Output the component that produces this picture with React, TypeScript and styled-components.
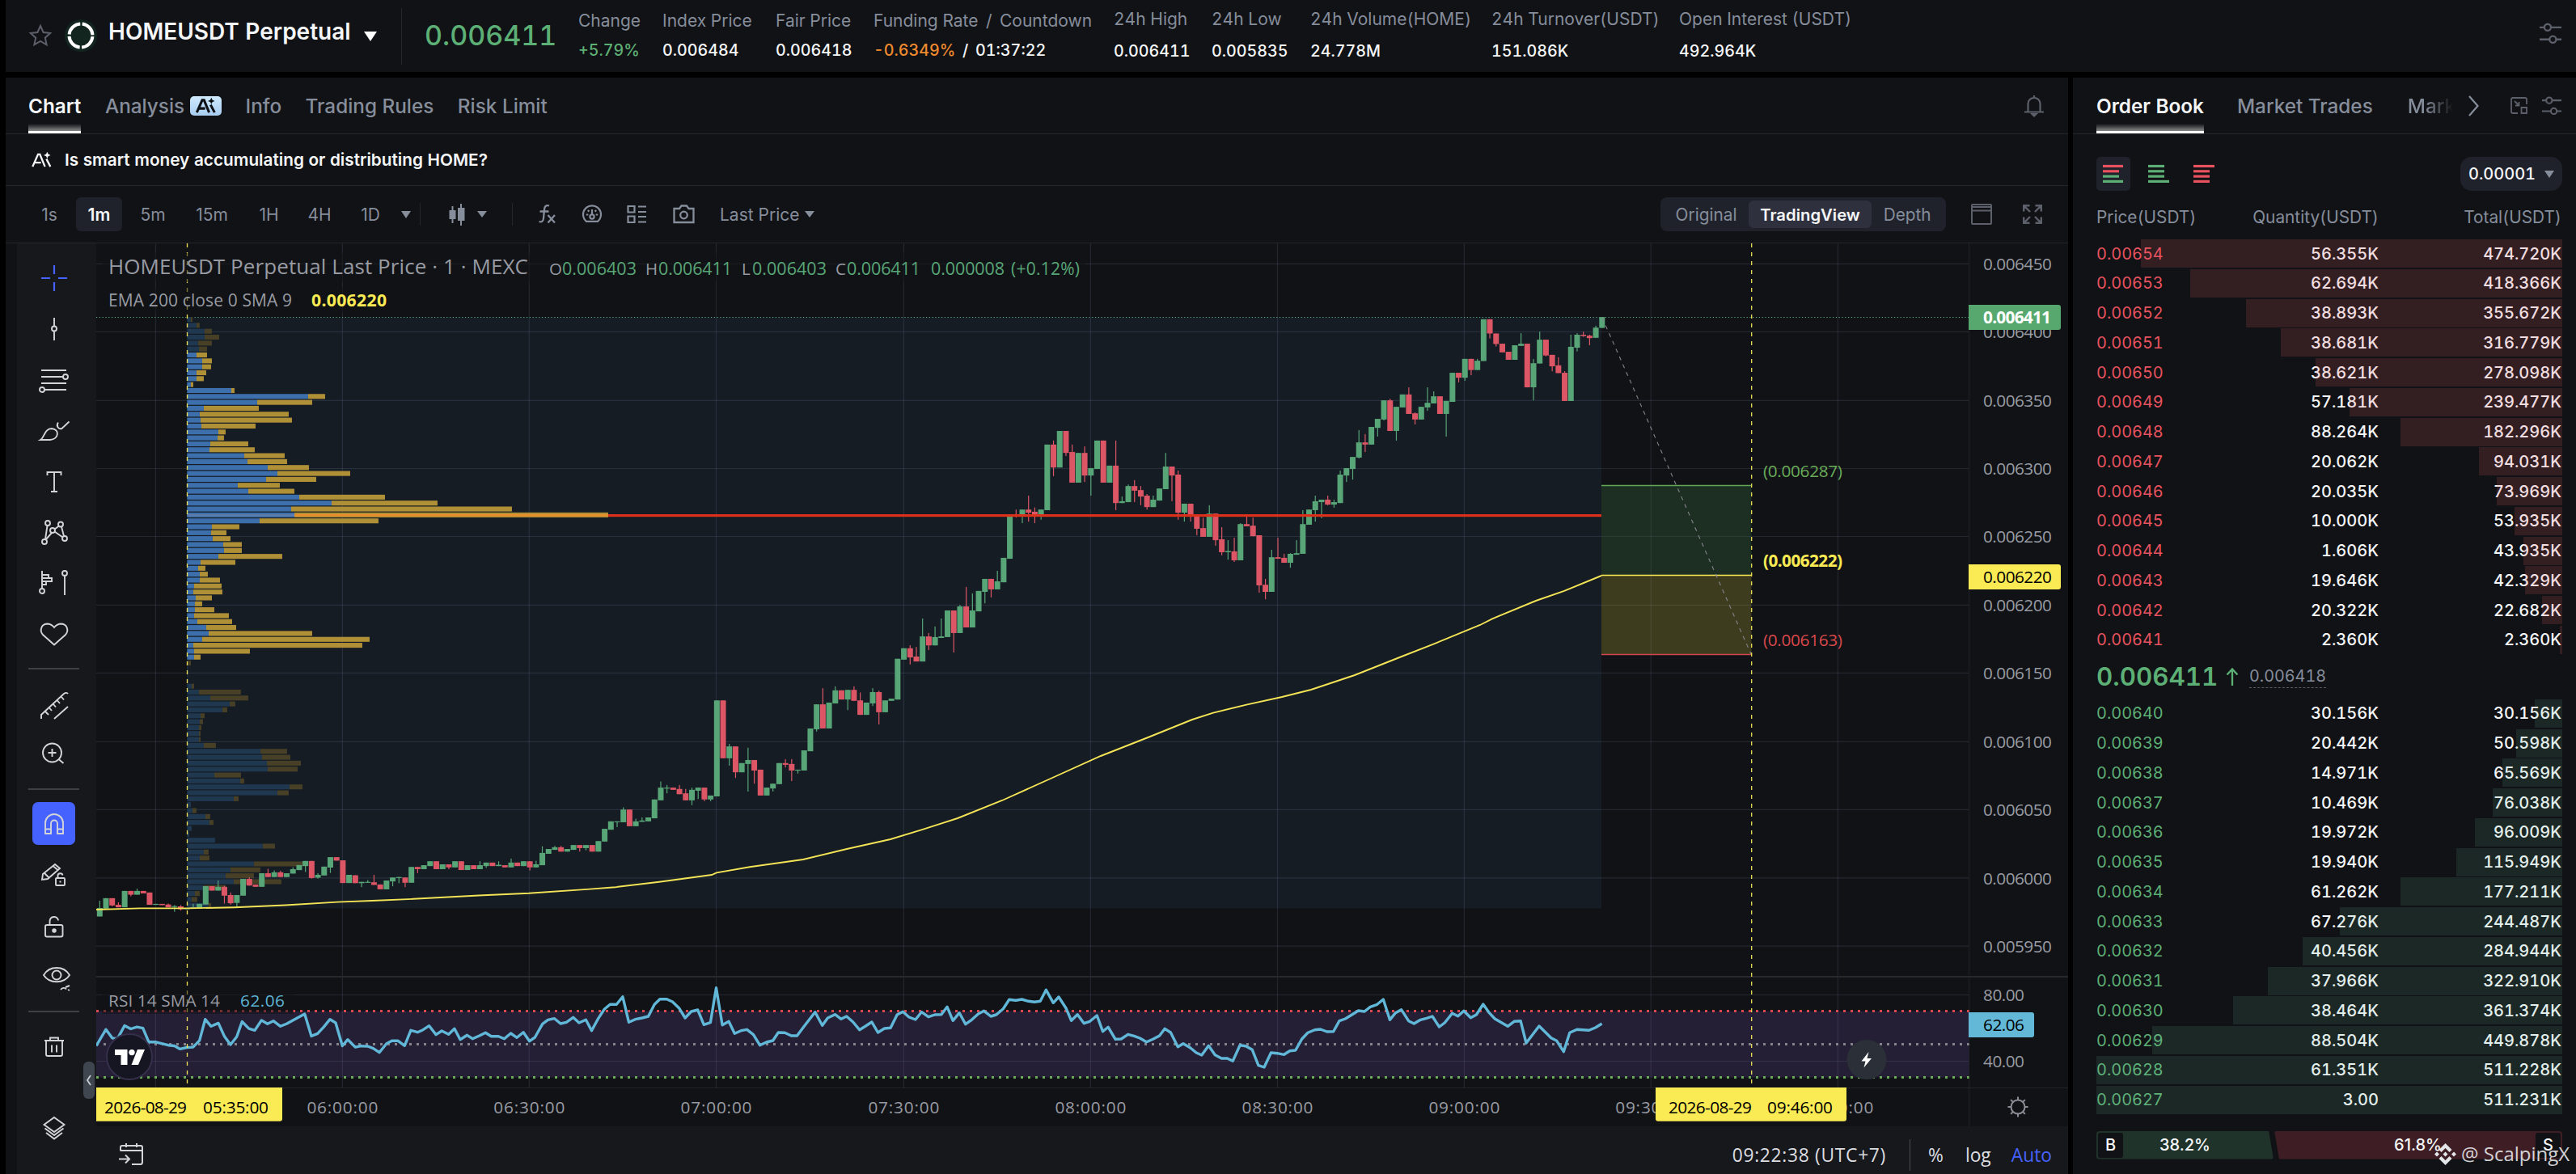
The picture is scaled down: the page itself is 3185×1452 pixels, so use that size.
import React from 'react';
import styled, { createGlobalStyle, css } from 'styled-components';

const c = {
  panel: '#111215',
  raised: '#17181c',
  line: '#24262b',
  chip: '#1f222b',
  muted: '#868d9b',
  faint: '#5c606a',
  white: '#f5f6f8',
  up: '#5db075',
  candleUp: '#58a677',
  candleDown: '#dc5666',
  down: '#e8525f',
  yellow: '#faea54',
  blue: '#4562ff',
  axis: '#989ba3',
};

const Global = createGlobalStyle`
  * { box-sizing: border-box; }
  body {
    margin: 0;
    background: #000;
    color: ${c.white};
    font-family: Inter, "Liberation Sans", sans-serif;
    font-variant-numeric: tabular-nums;
    overflow: hidden;
  }
`;

/* ---------- page frame ---------- */

const Page = styled.div`
  width: 3185px;
  height: 1452px;
  padding-left: 7px;
  display: flex;
  flex-direction: column;
  gap: 7px;
  position: relative;
  overflow: hidden;
`;
const Header = styled.header`
  height: 89px;
  flex: none;
  background: ${c.panel};
  display: flex;
  align-items: center;
  padding: 0 18px 0 29px;
`;
const Body = styled.main`
  flex: 1;
  min-height: 0;
  display: flex;
  gap: 6px;
`;
const ChartPanel = styled.section`
  width: 2550px;
  background: ${c.panel};
  display: flex;
  flex-direction: column;
`;
const BookPanel = styled.section`
  flex: 1;
  background: ${c.panel};
  display: flex;
  flex-direction: column;
`;

/* ---------- shared bits ---------- */

const Svg = styled.svg<{ $w: number; $h?: number; $color?: string; $sw?: number; $lift?: number }>`
  width: ${p => p.$w}px;
  height: ${p => p.$h ?? p.$w}px;
  margin-bottom: ${p => p.$lift ?? 0}px;
  flex: none;
  display: block;
  overflow: visible;
  fill: none;
  stroke: ${p => p.$color ?? c.faint};
  stroke-width: ${p => p.$sw ?? 2.4};
`;
const Caret = styled.i<{ $w?: number; $color?: string }>`
  flex: none;
  width: 0;
  height: 0;
  border-left: ${p => (p.$w ?? 13) / 2}px solid transparent;
  border-right: ${p => (p.$w ?? 13) / 2}px solid transparent;
  border-top: ${p => (p.$w ?? 13) * 0.72}px solid ${p => p.$color ?? c.muted};
`;
const Spacer = styled.span<{ $w?: number }>`
  flex: ${p => (p.$w ? 'none' : 1)};
  width: ${p => p.$w ?? 0}px;
`;
const Rule = styled.span<{ $h: number; $color?: string }>`
  flex: none;
  width: 1px;
  height: ${p => p.$h}px;
  background: ${p => p.$color ?? '#24262b'};
`;

/* ---------- header ---------- */

const Pair = styled.h1`
  margin: -11px 0 0 14px;
  width: 300px;
  font-size: 28px;
  font-weight: 600;
  line-height: 34px;
  white-space: nowrap;
`;
const LastPrice = styled.div`
  width: 190px;
  margin-left: 28px;
  margin-top: -2px;
  font-size: 34px;
  font-weight: 500;
  color: ${c.up};
`;
const Stat = styled.div<{ $w: number; $gap: number }>`
  width: ${p => p.$w}px;
  flex: none;
  display: flex;
  flex-direction: column;
  gap: ${p => p.$gap}px;
  margin-top: -2px;
  white-space: nowrap;
`;
const StatLabel = styled.span`
  font-size: 21px;
  line-height: 24px;
  color: ${c.muted};
`;
const StatValue = styled.span<{ $color?: string }>`
  font-size: 19.7px;
  line-height: 24px;
  font-weight: 500;
  color: ${p => p.$color ?? c.white};
`;
const Orange = styled.span`
  color: #ef8a2e;
`;

/* ---------- chart panel bars ---------- */

const TabRow = styled.nav<{ $pl: number; $pr: number; $gap: number }>`
  height: 70px;
  flex: none;
  display: flex;
  align-items: center;
  gap: ${p => p.$gap}px;
  padding: 0 ${p => p.$pr}px 0 ${p => p.$pl}px;
  border-bottom: 1px solid ${c.line};
`;
const Tab = styled.span<{ $active?: boolean; $fade?: boolean }>`
  height: 69px;
  display: flex;
  align-items: center;
  gap: 7px;
  padding-top: 4px;
  font-size: 24.3px;
  font-weight: ${p => (p.$active ? 600 : 500)};
  color: ${p => (p.$active ? c.white : c.muted)};
  border-bottom: 3px solid ${p => (p.$active ? '#fff' : 'transparent')};
  white-space: nowrap;
  ${p =>
    p.$active &&
    css`
      background: linear-gradient(to top, rgba(255, 255, 255, 0.5), rgba(255, 255, 255, 0) 9px);
    `}
  ${p =>
    p.$fade &&
    css`
      background: linear-gradient(to right, ${c.muted} 35%, ${c.panel} 95%);
      background-clip: text;
      -webkit-background-clip: text;
      color: transparent;
    `}
`;
const Badge = styled.span`
  width: 39px;
  height: 24px;
  border-radius: 5px;
  background: linear-gradient(#cfeaff, #a9cdf0);
  display: flex;
  align-items: center;
  justify-content: center;
`;
const Banner = styled.div`
  height: 64px;
  flex: none;
  display: flex;
  align-items: center;
  gap: 14px;
  padding-left: 31px;
  font-size: 20.75px;
  font-weight: 600;
  border-bottom: 1px solid ${c.line};
`;
const Toolbar = styled.div`
  height: 71px;
  flex: none;
  display: flex;
  align-items: center;
  padding: 0 32px 0 30px;
  border-bottom: 1px solid ${c.line};
  font-variant-numeric: normal;
`;
const Interval = styled.span<{ $w: number; $active?: boolean }>`
  height: 42px;
  width: ${p => p.$w}px;
  border-radius: 6px;
  display: flex;
  align-items: center;
  justify-content: center;
  font-size: 21px;
  font-weight: ${p => (p.$active ? 600 : 400)};
  color: ${p => (p.$active ? c.white : c.muted)};
  background: ${p => (p.$active ? c.chip : 'transparent')};
`;
const Intervals = styled.div`
  display: flex;
  gap: 9px;
`;
const ToolText = styled.span`
  font-size: 21px;
  color: ${c.muted};
  width: 98px;
  margin-right: 7px;
  white-space: nowrap;
`;
const Segments = styled.div`
  height: 42px;
  padding: 4px;
  border-radius: 8px;
  background: ${c.chip};
  display: flex;
  align-items: center;
`;
const Segment = styled.span<{ $active?: boolean }>`
  height: 34px;
  padding: 0 14.4px;
  border-radius: 6px;
  display: flex;
  align-items: center;
  font-size: ${p => (p.$active ? 20.3 : 20.8)}px;
  font-weight: ${p => (p.$active ? 600 : 400)};
  color: ${p => (p.$active ? c.white : c.muted)};
  background: ${p => (p.$active ? '#2f303e' : 'transparent')};
`;

/* ---------- workspace ---------- */

const Workspace = styled.div`
  flex: 1;
  min-height: 0;
  display: flex;
  padding-left: 14px;
`;
const Tools = styled.aside`
  width: 98px;
  background: ${c.raised};
  display: flex;
  flex-direction: column;
  align-items: center;
  padding: 12px 7px 0 0;
`;
const ToolSlot = styled.span<{ $h: number; $active?: boolean }>`
  height: ${p => p.$h}px;
  width: 53px;
  flex: none;
  display: flex;
  align-items: center;
  justify-content: center;
  ${p =>
    p.$active &&
    css`
      background: ${c.blue};
      border-radius: 7px;
    `}
`;
const ToolRule = styled.span<{ $mt: number; $mb: number }>`
  flex: none;
  width: 63px;
  height: 2px;
  margin: ${p => p.$mt}px 0 ${p => p.$mb}px;
  background: #3f4046;
`;
const CanvasCol = styled.div`
  flex: 1;
  display: flex;
  flex-direction: column;
  position: relative;
`;
const Footer = styled.footer`
  flex: 1;
  background: ${c.raised};
  display: flex;
  align-items: center;
  padding: 11px 20px 0 28px;
  font-family: 'Open Sans', 'Noto Sans', sans-serif;
  font-size: 22.8px;
  color: #dcdde0;
`;
const Clock = styled.span`
  letter-spacing: 0.7px;
  margin-right: 29px;
`;
const FootItem = styled.span<{ $ml: number; $color?: string }>`
  margin-left: ${p => p.$ml}px;
  color: ${p => p.$color ?? 'inherit'};
`;
const Collapse = styled.span`
  position: absolute;
  left: -16px;
  top: 1012px;
  width: 14px;
  height: 46px;
  border-radius: 6px;
  background: #3f4650;
  display: flex;
  align-items: center;
  justify-content: center;
`;

/* ---------- order book ---------- */

const BookTools = styled.div`
  height: 42px;
  flex: none;
  margin: 28px 17px 0 29px;
  display: flex;
  align-items: center;
`;
const Depth = styled.span<{ $active?: boolean }>`
  width: 42px;
  height: 42px;
  margin-right: 14px;
  border-radius: 5px;
  display: flex;
  align-items: center;
  justify-content: center;
  background: ${p => (p.$active ? c.chip : 'transparent')};
`;
const Step = styled.span`
  height: 42px;
  width: 126px;
  border-radius: 14px;
  background: ${c.chip};
  display: flex;
  align-items: center;
  justify-content: center;
  gap: 11px;
  font-size: 20px;
  font-weight: 500;
`;
const Cols = styled.div`
  display: grid;
  grid-template-columns: 181px 168px 1fr;
  align-items: center;
  & > :nth-child(n + 2) {
    text-align: right;
  }
`;
const BookHead = styled(Cols)`
  height: 30px;
  margin: 17px 18px 13px 29px;
  font-size: 20.8px;
  color: ${c.muted};
`;
const Side = styled.div`
  display: flex;
  flex-direction: column;
  gap: 1.75px;
`;
const Row = styled(Cols)`
  height: 35px;
  position: relative;
  margin: 0 17px 0 29px;
  padding-right: 1px;
  font-size: 20px;
  font-weight: 500;
`;
const Price = styled.span<{ $bid?: boolean }>`
  font-size: 19.9px;
  font-weight: 400;
  color: ${p => (p.$bid ? c.up : c.down)};
`;
const Bar = styled.i<{ $bid?: boolean }>`
  position: absolute;
  right: 0;
  top: 0;
  bottom: 0;
  background: ${p => (p.$bid ? 'rgba(105,195,155,.13)' : 'rgba(228,92,105,.16)')};
`;
const Mid = styled.div`
  height: 56px;
  flex: none;
  margin-left: 29px;
  display: flex;
  align-items: center;
  font-size: 31.3px;
  font-weight: 600;
  color: ${c.up};
`;
const MidPrice = styled.span`
  width: 161px;
`;
const Fair = styled.span`
  margin-left: 14px;
  font-size: 19.8px;
  font-weight: 400;
  line-height: 27px;
  color: ${c.muted};
  border-bottom: 1px dashed #565b66;
`;
const Ratio = styled.div`
  height: 35px;
  flex: none;
  margin: 21px 17px 0 29px;
  display: flex;
`;
const RatioPart = styled.div<{ $buy?: boolean }>`
  width: ${p => (p.$buy ? 219 : 357)}px;
  height: 35px;
  display: grid;
  grid-template-columns: 31px 1fr 31px;
  align-items: center;
  padding: 0 2px;
  text-align: center;
  font-size: 20px;
  font-weight: 500;
  font-variant-numeric: normal;
  border-radius: 4px;
  background: ${p => (p.$buy ? '#20332b' : '#3e1e24')};
  clip-path: ${p =>
    p.$buy ? 'polygon(0 0, calc(100% - 6px) 0, 100% 100%, 0 100%)' : 'polygon(1px 0, 100% 0, 100% 100%, 7px 100%)'};
`;
const Tag = styled.span`
  height: 31px;
  line-height: 31px;
  border-radius: 3px;
  background: ${c.panel};
`;
const Watermark = styled.div`
  position: absolute;
  left: 3010px;
  top: 1410px;
  display: flex;
  align-items: center;
  gap: 6px;
  font-family: 'Open Sans', 'Noto Sans', sans-serif;
  font-size: 24px;
  line-height: 34px;
  color: rgba(235, 236, 240, 0.88);
  white-space: nowrap;
`;

/* ---------- chart geometry ---------- */

const MINUTE = 7.7075;
const FIRST_X = 123.3;
const LEFT = 119;
const AXIS_X = 2434.7;
const VLINES = [192.4, 423.4, 654.3, 885.5, 1117.4, 1348.4, 1579.5, 1810.4, 2041.2, 2272.4];
const HLINES: [number, string][] = [
  [326.4, '0.006450'],
  [410.4, '0.006400'],
  [495.4, '0.006350'],
  [579.5, '0.006300'],
  [663.5, '0.006250'],
  [748.4, '0.006200'],
  [832.4, '0.006150'],
  [917.3, '0.006100'],
  [1001.3, '0.006050'],
  [1085.9, '0.006000'],
  [1170.2, '0.005950'],
];

/* Candles, one per minute: direction top bottom [high] [low]; each run has its own y origin and step. */
const RUNS: { y0: number; step: number; data: string }[] = [
  {
    y0: 840,
    step: 0.3903,
    data: `g 725 752 702|g 694 727|r 694 717 694 720|r 715 723 707|g 671 723|r 671 683 671 688|g 671 683 664|r 671 679|r 676 715|g 712 715|r 712 716|r 714 723 711|g 719 722 716 737|r 720 729 716 733|g 725 729|g 723 726 712|g 712 726|g 656 714|r 656 670|g 658 670 638|r 658 686 655 711|r 684 710 676 714|g 684 709 684 721|g 633 686|r 633 654 628|r 651 658|g 615 658|r 615 627 601|g 612 627 606|r 612 627 607|g 615 627|g 602 616 596|g 589 605|g 576 592 576 611|r 576 630 576 632|g 620 629 615 632|g 594 622|g 564 597 564 614|r 564 575|r 574 646|g 620 646`,
  },
  {
    y0: 290,
    step: 0.5421,
    data: `r 1462 1480|g 1477 1480 1477 1489|g 1477 1479 1473|r 1478 1484 1461|r 1483 1494|g 1474 1494|g 1467 1476 1467 1487|g 1466 1468 1466 1480|r 1467 1479 1467 1489|g 1443 1479|r 1443 1448 1443 1457|g 1439 1448|g 1430 1441|r 1430 1448|g 1437 1448|r 1437 1444 1437 1448|g 1430 1444|r 1430 1450|g 1439 1450|r 1439 1448|g 1439 1448 1430|g 1433 1441 1433 1445|r 1433 1441|g 1438 1441 1430|r 1439 1444|g 1433 1444 1424|r 1433 1441|g 1430 1441|r 1430 1444 1430 1451|g 1437 1444 1429|g 1411 1439 1396|g 1402 1413|g 1398 1404 1395|r 1398 1408 1395|g 1402 1408|g 1393 1404|r 1393 1400 1393 1408|g 1393 1400 1393 1405|r 1393 1408|g 1384 1408|g 1356 1385|g 1339 1358|g 1339 1341 1339 1352|g 1312 1341 1307|r 1312 1350|g 1339 1350 1333|g 1337 1340 1330|g 1330 1339|g 1289 1332|g 1262 1291 1248|g 1262 1264 1256 1275|r 1262 1267|r 1265 1277 1256|r 1275 1291 1265|g 1267 1291 1262 1302|g 1262 1269 1262 1288|r 1262 1289 1262 1293|g 1280 1289 1280 1293|g 1063 1282|r 1063 1195|g 1168 1195 1162 1212|r 1168 1227 1168 1240|g 1206 1227|g 1199 1208 1171 1271|r 1199 1223 1199 1253|r 1221 1280|g 1262 1280|g 1253 1264 1253 1271|g 1206 1254|r 1206 1210 1197 1216|r 1208 1223 1197 1247|g 1221 1223 1221 1230|g 1177 1223|g 1127 1179|g 1072 1129 1072 1134|r 1072 1127 1035|g 1068 1127|g 1040 1070 1031|r 1040 1061|g 1039 1061 1039 1085|r 1039 1064 1031|r 1063 1096 1045|g 1068 1096|g 1044 1070 1035 1076|r 1044 1090 1041 1118|g 1063 1090|g 1059 1064|g 968 1061|g 944 970|r 944 965 937 981`,
  },
  {
    y0: 290,
    step: 0.3827,
    data: `r 1364 1380 1333|g 1299 1380 1241|r 1299 1328 1288 1343|g 1301 1328 1267|g 1299 1304 1241|g 1215 1301|r 1215 1288 1215 1351|g 1202 1288 1197|r 1202 1270 1139|g 1215 1270 1160|g 1152 1218|g 1113 1155 1113 1192|r 1113 1147 1113 1173|g 1121 1147 1087|g 1045 1124|g 905 1048|r 904 907 889 915|g 889 907 889 933|r 889 899 844 928|r 896 906 882 933|g 889 907 889 922|g 679 891|r 679 753 666 781|g 635 753|r 635 706 635 716|r 703 802 679|g 706 802|r 706 779 685 800|g 755 779 755 844|g 666 758|r 666 802|g 747 802|r 747 868 666 891|g 862 868 847|g 813 865 808|r 813 828 794 865|r 826 847 813 875|r 844 881 839 889|g 857 881 844|g 821 860|g 750 823 706|r 750 779 750 862|r 776 899 763 922|g 870 899 870 928|r 870 907 870 928|r 905 951 905 972|r 949 977 915|g 902 977 875|r 902 988 902 1006|r 985 1027 946 1037|g 1023 1027 988 1051|r 1024 1053 980 1058|g 936 1053 933|r 936 943 905|r 941 975 915|r 972 1134 972 1158|r 1132 1155 1113 1179|g 1043 1155 1019|r 1043 1048 980|r 1045 1061 1032|g 1032 1061 1030 1077|g 1030 1035 988|g 936 1032 891|g 889 938|g 862 891 844 928|g 857 865 857 917|r 857 873 844 875|g 865 873 857 883|g 776 868 763|g 755 779 755 800|g 719 758 719 792|g 672 721 632 724|r 672 679 645 703|g 622 679|g 596 625 596 653|g 536 598 536 601|r 536 635 531|g 557 635 557 666|g 517 559|r 517 580 494|r 578 598 575 614|g 557 598|g 544 559 494 570|g 523 546 507|r 523 580|g 538 580 538 653|g 447 541|r 447 463 447 478|g 402 463 402 473|r 402 438 402 455|g 408 438 402|g 274 409|r 274 320 274 336|r 320 354 320 362|r 353 381|r 379 405|g 358 405|g 353 360 319|r 353 494|g 416 494 402 536|g 340 417 314|r 340 391 340 394|r 389 426 389 442|r 423 448 397|r 447 538 442|g 363 538 324|g 324 366 319 378|r 324 328 314 331|r 327 335 324 358|g 301 334 295|g 267 302`,
  },
];

type Candle = { x: number; up: boolean; top: number; bottom: number; high: number; low: number };
const candles: Candle[] = [];
RUNS.forEach(run =>
  run.data.split('|').forEach(item => {
    const [d, ...n] = item.split(' ');
    const [top, bottom, high = top, low = bottom] = n.map(v => run.y0 + Number(v) * run.step);
    candles.push({ x: FIRST_X + candles.length * MINUTE, up: d === 'g', top, bottom, high, low });
  }),
);

/* Volume profile: buy length and total length in thirds of a pixel, top row first. */
const PROFILE_X = 231.3;
const PROFILE: [number, number][] = [
  [14, 20], [35, 47], [65, 92], [65, 119], [41, 92], [44, 74],
  [35, 74], [56, 92], [56, 89], [35, 71], [35, 62], [14, 23], [164, 176], [449, 512], [260, 464], [62, 266],
  [47, 377], [50, 389], [53, 254], [116, 143], [113, 137], [86, 227], [83, 251], [212, 362], [224, 371], [299, 452],
  [335, 605], [293, 479], [188, 344], [227, 398], [416, 734], [536, 929], [386, 1205], [398, 1562], [269, 710],
  [92, 194], [89, 146], [95, 161], [134, 203], [137, 203], [116, 353], [50, 179], [41, 68], [47, 77], [47, 122],
  [26, 128], [23, 131], [32, 92], [29, 56], [29, 101], [26, 155], [38, 167], [71, 182], [80, 464], [56, 677],
  [23, 650], [26, 233], [26, 50],
  [3, 14], [3, 3], [3, 3], [3, 3],
  [17, 26], [44, 200], [86, 227], [158, 179], [131, 149], [50, 65], [47, 59], [44, 53], [44, 50], [44, 50],
  [62, 107], [272, 371], [278, 383], [296, 422], [299, 410], [101, 200], [197, 212], [380, 428], [335, 377],
  [173, 191], [14, 14], [20, 35], [68, 86], [83, 98], [17, 17], [8, 8], [104, 104], [281, 326], [62, 80], [47, 83],
  [248, 449], [161, 272], [143, 248], [173, 350], [62, 143], [29, 47], [17, 38], [79, 89],
];
const rowY = (i: number) => (i < 60 ? 395 + i * 7.328 : 848.6 + (i - 62) * 7.328);

const EMA =
  '119,1125 173,1123.4 233,1123.4 290,1122.2 353,1119.5 417,1115.6 460,1114 511,1111.8 592,1107.5 654,1104.8 726,1099.9 761,1097.2 815,1090.7 880,1082 886,1079.3 927,1072.3 993,1063 1047,1050 1101,1038 1140,1026.2 1184,1012 1239,990 1300,962.5 1361,935 1422,911 1474,890 1500,881.6 1541,871.7 1585,862 1621,853 1675,835 1733,812 1773,796.3 1830,773 1845,765.3 1899,743 1934,730.9 1980,712';

const plot = (raw: string, x0: number, sx: number, y0: number, sy: number) =>
  raw.split(' ').map(p => {
    const [x, y] = p.split(',').map(Number);
    return `${(x0 + x * sx).toFixed(1)},${(y0 + y * sy).toFixed(1)}`;
  });
const RSI = [
  ...plot('357,1162 393,1110 416,1137 430,1139 438,1136 462,1098 485,1108 508,1102 530,1106 552,1150 578,1150 624,1160 647,1162 668,1172 693,1167 716,1166 740,1145 761,1078 783,1100 810,1090 832,1131 855,1158 878,1133 898,1085 923,1107 945,1113 970,1081 992,1092 1014,1083 1040,1100 1063,1092 1130,1061 1155,1131 1178,1123 1201,1102 1224,1078 1245,1089 1270,1162 1290,1142 1318,1166 1340,1162', 0, 1 / 3, 840, 0.3903),
  ...plot('15,281 33,282 48,290 65,305 85,272 100,262 117,262 135,280 152,223 171,230 186,221 203,206 222,239 238,225 257,238 273,217 289,257 308,241 323,254 342,243 359,232 375,245 395,245 411,254 429,234 446,250 464,230 481,263 496,249 517,199 532,184 550,179 567,198 583,193 602,175 618,195 637,184 653,224 670,182 688,145 704,127 722,127 739,98 756,193 774,182 793,177 810,171 827,127 842,107 861,107 877,117 895,140 912,177 929,153 947,147 964,202 982,194 998,65 1015,203 1033,190 1049,235 1067,224 1083,220 1101,239 1119,278 1137,267 1155,261 1170,231 1188,232 1206,243 1222,243 1240,211 1272,155 1292,205 1307,177 1327,164 1344,181 1359,171 1377,192 1395,221 1412,207 1429,192 1446,231 1464,216 1481,214 1499,165 1515,154 1532,174 1550,183', 440, 0.4464, 1200, 1 / 3),
  ...plot('21,155 40,173 58,165 76,164 92,136 108,187 126,158 143,200 160,184 178,162 194,151 213,171 228,165 247,143 264,109 282,112 299,108 317,115 334,118 350,115 366,73 386,121 401,99 421,140 436,187 453,164 471,197 487,190 507,168 523,227 538,211 558,256 574,255 593,238 610,244 626,252 644,266 662,256 680,243 695,217 711,231 731,284 746,272 765,287 782,306 797,315 816,280 834,314 852,327 868,327 883,337 903,278 919,281 937,295 954,353 970,360 989,306 1006,308 1025,313 1041,299 1057,297 1075,254 1091,232 1110,221 1126,219 1144,228 1162,227 1178,188 1195,180 1213,165 1231,150 1248,153 1264,136 1283,127 1300,108 1318,184 1334,158 1350,146 1370,188 1385,198 1403,184 1420,178 1436,171 1455,210 1470,195 1491,160 1507,170 1523,151', 1130, 0.4464, 1200, 1 / 3),
  ...plot('37,476 51,465 68,426 83,458 97,480 129,508 145,490 161,488 175,570 207,507 237,551 251,562 268,602 283,532 301,520 331,523 347,513 363,498', 1800, 0.4974, 1100, 1 / 3),
].join(' ');

/* ---------- chart ---------- */

const ChartSvg = styled.svg`
  display: block;
  flex: none;
  width: 2438px;
  height: 1092px;
  font-family: 'Open Sans', 'Noto Sans', sans-serif;
`;
const Label = styled.text<{ $size?: number; $bold?: boolean; $color?: string }>`
  font-size: ${p => p.$size ?? 20.8}px;
  font-weight: ${p => (p.$bold ? 700 : 500)};
  fill: ${p => p.$color ?? c.axis};
  white-space: pre;
`;
type TProps = { x: number; y: number; w: number; size?: number; bold?: boolean; color?: string; children: string };
const T = ({ x, y, w, size, bold, color, children }: TProps) => (
  <Label x={x} y={y} textLength={w} lengthAdjust="spacing" $size={size} $bold={bold} $color={color}>
    {children}
  </Label>
);

function Chart() {
  return (
    <ChartSvg viewBox="119 301 2438 1092">
      <rect x={119} y={301} width={2438} height={1092} fill={c.panel} />
      <rect x={PROFILE_X} y={392.5} width={1980 - PROFILE_X} height={731} fill="#151c24" />
      <rect x={LEFT} y={1250.5} width={AXIS_X - LEFT} height={82} fill="#251f35" />
      <g stroke="#7c8cb4" strokeOpacity={0.17} strokeWidth={1.2}>
        {VLINES.map(x => (
          <line key={x} x1={x} x2={x} y1={301} y2={1345} />
        ))}
        {HLINES.map(([y]) => (
          <line key={y} x1={LEFT} x2={AXIS_X} y1={y} y2={y} />
        ))}
        <line x1={LEFT} x2={AXIS_X} y1={1230.5} y2={1230.5} />
        <line x1={LEFT} x2={AXIS_X} y1={1312.5} y2={1312.5} />
      </g>
      <g stroke="#222429">
        <line x1={LEFT} x2={2557} y1={1345.5} y2={1345.5} />
        <line x1={AXIS_X} x2={AXIS_X} y1={301} y2={1393} />
        <line x1={LEFT} x2={2557} y1={1208} y2={1208} stroke="#27292e" strokeWidth={2.2} />
      </g>

      <line x1={LEFT} x2={AXIS_X} y1={392.5} y2={392.5} stroke="#5cae86" strokeWidth={1.2} strokeDasharray="1.2 2.6" />

      {PROFILE.map(([buy, total], i) => {
        const lit = i >= 6 && i < 58;
        const y = rowY(i) - 3;
        return (
          <g key={i}>
            <rect x={PROFILE_X} y={y} width={buy / 3} height={6.1} fill={lit ? '#3c6fac' : '#1f3850'} />
            <rect x={PROFILE_X + buy / 3} y={y} width={(total - buy) / 3} height={6.1} fill={lit ? '#b09037' : '#473f26'} />
          </g>
        );
      })}
      <rect x={PROFILE_X} y={635.8} width={133} height={2.8} fill="#5d7bab" />
      <rect x={PROFILE_X + 133} y={635.8} width={388} height={2.8} fill="#e88f2c" />

      {candles.map(k => {
        const color = k.up ? c.candleUp : c.candleDown;
        return (
          <g key={k.x}>
            <rect x={k.x - 0.6} y={k.high} width={1.2} height={k.low - k.high} fill={color} />
            <rect x={k.x - 3.5} y={k.top} width={7} height={Math.max(1.2, k.bottom - k.top)} fill={color} />
          </g>
        );
      })}
      <rect x={752} y={636} width={1228} height={3.2} fill="#dc301b" />
      <polyline points={EMA} fill="none" stroke="#f3e356" strokeWidth={1.9} />

      <rect x={1980} y={600.5} width={185.5} height={111} fill="#3f7d45" fillOpacity={0.27} />
      <rect x={1980} y={711.5} width={185.5} height={98} fill="#e0d042" fillOpacity={0.22} />
      <line x1={1980} x2={2165.5} y1={600.5} y2={600.5} stroke="#63a857" strokeWidth={1.4} />
      <line x1={1980} x2={2165.5} y1={711.5} y2={711.5} stroke={c.yellow} strokeWidth={1.4} />
      <line x1={1980} x2={2165.5} y1={809.5} y2={809.5} stroke="#d2474b" strokeWidth={1.4} />
      <line x1={1981} x2={2165} y1={393} y2={809} stroke="#84868d" strokeWidth={1.1} strokeDasharray="5 5.5" />

      <g strokeWidth={3} strokeDasharray="3 6">
        <line x1={LEFT} x2={AXIS_X} y1={1250.5} y2={1250.5} stroke="#d9484c" />
        <line x1={LEFT} x2={AXIS_X} y1={1291.5} y2={1291.5} stroke="#85838c" />
        <line x1={LEFT} x2={AXIS_X} y1={1332.5} y2={1332.5} stroke="#6cac58" />
      </g>
      <polyline points={RSI} fill="none" stroke="#61b7d7" strokeWidth={3.4} strokeLinejoin="round" />

      <g stroke="#f0e158" strokeWidth={1.3} strokeDasharray="5 6">
        <line x1={231.5} x2={231.5} y1={301} y2={1345} />
        <line x1={2165.7} x2={2165.7} y1={301} y2={1345} />
      </g>

      <rect x={126} y={313} width={1216} height={36} fill={c.panel} fillOpacity={0.5} />
      <rect x={126} y={355} width={360} height={32} fill={c.panel} fillOpacity={0.5} />
      <rect x={126} y={1223} width={237} height={31} fill={c.panel} fillOpacity={0.5} />
      <T x={134} y={338.8} w={519} size={26}>HOMEUSDT Perpetual Last Price · 1 · MEXC</T>
      <T x={679} y={340.4} w={16} size={20.5}>O</T>
      <T x={695} y={340.4} w={92} size={21.5} color={c.candleUp}>0.006403</T>
      <T x={798} y={340.4} w={15} size={20.5}>H</T>
      <T x={814} y={340.4} w={91} size={21.5} color={c.candleUp}>0.006411</T>
      <T x={917} y={340.4} w={11} size={20.5}>L</T>
      <T x={930} y={340.4} w={92} size={21.5} color={c.candleUp}>0.006403</T>
      <T x={1033} y={340.4} w={13} size={20.5}>C</T>
      <T x={1047} y={340.4} w={91} size={21.5} color={c.candleUp}>0.006411</T>
      <T x={1151} y={340.4} w={91} size={21.5} color={c.candleUp}>0.000008</T>
      <T x={1250} y={340.4} w={85} size={21} color={c.candleUp}>(+0.12%)</T>
      <T x={134} y={378.8} w={227} size={21}>EMA 200 close 0 SMA 9</T>
      <T x={385} y={378.8} w={93} size={21.2} bold color={c.yellow}>0.006220</T>
      <T x={134} y={1245} w={138} size={20.8}>RSI 14 SMA 14</T>
      <T x={297} y={1245} w={55} size={20.8} color="#5db3d4">62.06</T>

      <T x={2180} y={590.2} w={98} color="#6aac59">(0.006287)</T>
      <T x={2180} y={701} w={98} bold color={c.yellow}>(0.006222)</T>
      <T x={2180} y={799.2} w={98} color="#d9484c">(0.006163)</T>

      {HLINES.map(([y, text]) => (
        <T key={text} x={2452} y={y + 7.8} w={85}>{text}</T>
      ))}
      <T x={2452} y={1238} w={51}>80.00</T>
      <T x={2452} y={1320} w={51}>40.00</T>
      <path d="M2434 377h111a3 3 0 0 1 3 3v25a3 3 0 0 1-3 3h-111z" fill="#57a86f" />
      <T x={2452} y={400.2} w={84} bold color="#fff">0.006411</T>
      <path d="M2434 698h111a3 3 0 0 1 3 3v25a3 3 0 0 1-3 3h-111z" fill={c.yellow} />
      <T x={2452} y={721.2} w={85} color="#000">0.006220</T>
      <path d="M2434 1252h78a3 3 0 0 1 3 3v25a3 3 0 0 1-3 3h-78z" fill="#62b8d6" />
      <T x={2452} y={1275.2} w={51} color="#000">62.06</T>

      {['06:00:00', '06:30:00', '07:00:00', '07:30:00', '08:00:00', '08:30:00', '09:00:00', '09:30:00', '10:00:00'].map((t, i) => (
        <T key={t} x={VLINES[i + 1] - 44} y={1377.4} w={88}>{t}</T>
      ))}
      <path d="M119 1345h230v38.700a3 3 0 0 1-3 3h-227z" fill={c.yellow} />
      <T x={129} y={1377.4} w={102} color="#000">2026-08-29</T>
      <T x={251} y={1377.4} w={81} color="#000">05:35:00</T>
      <path d="M2047 1345h236v38.700a3 3 0 0 1-3 3h-230a3 3 0 0 1-3-3z" fill={c.yellow} />
      <T x={2063} y={1377.4} w={103} color="#000">2026-08-29</T>
      <T x={2185} y={1377.4} w={81} color="#000">09:46:00</T>

      <circle cx={160} cy={1307} r={28} fill="#151622" stroke="#352f4b" strokeWidth={2} />
      <g fill="#fff">
        <path d="M142 1298h15.500v19h-8v-12h-7.500z" />
        <circle cx={163} cy={1301.600} r={3.700} />
        <path d="M170 1298h9l-8 19h-8.500z" />
      </g>
      <circle cx={2308} cy={1310.500} r={24.500} fill="#2a2f38" />
      <path d="M2310.500 1301l-9 11.500h5l-2 8 9.500-11.500h-5.500z" fill="#fff" />
      <g fill="none" stroke="#8b8e96" strokeWidth={2}>
        <circle cx={2495} cy={1369} r={8.500} />
        {[0, 45, 90, 135, 180, 225, 270, 315].map(a => (
          <line key={a} x1={2495} x2={2495} y1={1356.500} y2={1360.500} transform={`rotate(${a} 2495 1369)`} />
        ))}
      </g>
    </ChartSvg>
  );
}

/* ---------- icons ---------- */

const SlidersIcon = ({ w, lift }: { w: number; lift?: number }) => (
  <Svg $w={w} $lift={lift} viewBox="0 0 28 28">
    <path d="M0 6h6M14.500 6h13.500M0 21.500h13M21 21.500h7" />
    <circle cx="10.300" cy="6" r="4.200" />
    <circle cx="17" cy="21.500" r="4.200" />
  </Svg>
);
const AiMark = ({ w, h, color, sw = 2.6 }: { w: number; h: number; color: string; sw?: number }) => (
  <Svg $w={w} $h={h} $color={color} $sw={sw} viewBox="0 0 28 20">
    <path d="M1 19L8.500 2h2.500L18 19M4.500 13.500h8M20 8.500L25.500 19" />
    <path d="M21 -1.500l1.400 3.300 3.300 1.400-3.300 1.400L21 7.900l-1.400-3.300-3.300-1.400 3.300-1.400z" fill={color} stroke="none" />
  </Svg>
);
const bars = (colors: string[], widths: number[]) => (
  <Svg $w={26} $h={24} viewBox="0 0 26 24" $sw={3.2}>
    {colors.map((k, i) => (
      <path key={i} d={`M0 ${2.500 + i * 6.300}h${widths[i]}`} stroke={k} />
    ))}
  </Svg>
);

const side = { $w: 40, $color: '#d3d4d8', $sw: 1.9, viewBox: '0 0 40 40' };
const topTools: React.ReactNode[] = [
  <path key="a" stroke={c.blue} strokeWidth={2.2} d="M20 4v11M20 25v11M4 20h11M25 20h11" />,
  <g key="b"><path d="M20 6v10.500M20 22.500V34" /><circle cx="20" cy="19.500" r="3" /></g>,
  <g key="c"><path d="M4 8h31M4 16h27M4 24h31M8 32h27" /><circle cx="34" cy="16" r="3" /><circle cx="5" cy="32" r="3" /></g>,
  <path key="d" d="M3 31c5-3 5-14 14-14 10 1 9 13-2 14zM25 9.500c-3 4 0 9 4.500 7.500l9-8.500" />,
  <path key="e" d="M11.500 12V8h17v4M20 8v24M16 32h8" />,
  <g key="f"><circle cx="12" cy="9" r="3" /><circle cx="28" cy="10.500" r="3" /><circle cx="18" cy="18" r="3" /><circle cx="8" cy="32" r="3" /><circle cx="33" cy="28" r="3" /><path d="M11.500 12L9 29M9.500 29.500L17 21M20.500 16.500l5.500-4M29 13.500l3 11.500M20.500 19.500l10 7" /></g>,
  <g key="g"><path d="M5 5v22M5 10h8v4H5M5 14h12v4H5M5 18h5v4H5M33 11v24" /><circle cx="5" cy="30" r="3" /><circle cx="33" cy="8" r="3" /></g>,
  <path key="h" d="M20 33.500L6 21C1.500 16 4 8 11 7.500c4.500 0 7 2 9 4.500 2-2.500 4.500-4.500 9-4.500 7 .5 9.500 8.500 5 13.500z" />,
];

/* ---------- order book data ---------- */

const asks = [
  ['0.00654', '56.355K', '474.720K'], ['0.00653', '62.694K', '418.366K'], ['0.00652', '38.893K', '355.672K'],
  ['0.00651', '38.681K', '316.779K'], ['0.00650', '38.621K', '278.098K'], ['0.00649', '57.181K', '239.477K'],
  ['0.00648', '88.264K', '182.296K'], ['0.00647', '20.062K', '94.031K'], ['0.00646', '20.035K', '73.969K'],
  ['0.00645', '10.000K', '53.935K'], ['0.00644', '1.606K', '43.935K'], ['0.00643', '19.646K', '42.329K'],
  ['0.00642', '20.322K', '22.682K'], ['0.00641', '2.360K', '2.360K'],
];
const bids = [
  ['0.00640', '30.156K', '30.156K'], ['0.00639', '20.442K', '50.598K'], ['0.00638', '14.971K', '65.569K'],
  ['0.00637', '10.469K', '76.038K'], ['0.00636', '19.972K', '96.009K'], ['0.00635', '19.940K', '115.949K'],
  ['0.00634', '61.262K', '177.211K'], ['0.00633', '67.276K', '244.487K'], ['0.00632', '40.456K', '284.944K'],
  ['0.00631', '37.966K', '322.910K'], ['0.00630', '38.464K', '361.374K'], ['0.00629', '88.504K', '449.878K'],
  ['0.00628', '61.351K', '511.228K'], ['0.00627', '3.00', '511.231K'],
];
const Book = ({ rows, bid }: { rows: string[][]; bid?: boolean }) => (
  <Side>
    {rows.map(([p, q, t]) => (
      <Row key={p}>
        <Price $bid={bid}>{p}</Price>
        <span>{q}</span>
        <span>{t}</span>
        <Bar $bid={bid} style={{ width: parseFloat(t) * (bid ? 1.1267 : 1.0985) }} />
      </Row>
    ))}
  </Side>
);

const stats: [string, React.ReactNode, number, number][] = [
  ['Change', <StatValue $color={c.up}>+5.79%</StatValue>, 104, 12],
  ['Index Price', <StatValue>0.006484</StatValue>, 140, 12],
  ['Fair Price', <StatValue>0.006418</StatValue>, 121, 12],
  ['Funding Rate\u2009 / \u2009Countdown', <StatValue><Orange>-0.6349%</Orange>&thinsp; / &thinsp;01:37:22</StatValue>, 297, 12],
  ['24h High', <StatValue>0.006411</StatValue>, 121, 15.5],
  ['24h Low', <StatValue>0.005835</StatValue>, 122, 15.5],
  ['24h Volume(HOME)', <StatValue>24.778M</StatValue>, 224, 15.5],
  ['24h Turnover(USDT)', <StatValue>151.086K</StatValue>, 232, 15.5],
  ['Open Interest (USDT)', <StatValue>492.964K</StatValue>, 240, 15.5],
];

const intervals: [string, number][] = [
  ['1s', 48], ['1m', 57], ['5m', 58], ['15m', 70], ['1H', 53], ['4H', 54], ['1D', 54],
];

export default function App() {
  return (
    <>
      <Global />
      <Page>
        <Header>
          <Svg $w={28} $lift={2} viewBox="0 0 28 28" $sw={2}>
            <path d="M14 2l3.600 8 8.600.9-6.400 5.800 1.800 8.600L14 21l-7.600 4.300 1.800-8.600L1.800 10.900l8.600-.9z" />
          </Svg>
          <Spacer $w={16} />
          <Svg $w={40} $lift={2} viewBox="0 0 40 40" $color="#fff" $sw={4}>
            <circle cx="20" cy="20" r="20" fill="#12261f" stroke="none" />
            <circle cx="20" cy="20" r="14.500" strokeDasharray="20.300 2.480" strokeDashoffset="-1.240" />
          </Svg>
          <Pair>HOMEUSDT Perpetual</Pair>
          <Spacer $w={16} />
          <Caret $w={17} $color="#fff" />
          <Spacer $w={30} />
          <Rule $h={70} />
          <LastPrice>0.006411</LastPrice>
          {stats.map(([label, value, w, gap]) => (
            <Stat key={label} $w={w} $gap={gap}>
              <StatLabel>{label}</StatLabel>
              {value}
            </Stat>
          ))}
          <Spacer />
          <SlidersIcon w={27} lift={7} />
        </Header>

        <Body>
          <ChartPanel>
            <TabRow $pl={28} $pr={30} $gap={29.5}>
              <Tab $active>Chart</Tab>
              <Tab>
                Analysis
                <Badge>
                  <AiMark w={30} h={18} color="#0d1014" sw={3.4} />
                </Badge>
              </Tab>
              <Tab>Info</Tab>
              <Tab>Trading Rules</Tab>
              <Tab>Risk Limit</Tab>
              <Spacer />
              <Svg $w={24} $h={26} viewBox="0 0 24 26" $sw={2.2}>
                <path d="M12 0v3M4.500 20V10.500C4.500 6 8 3 12 3s7.500 3 7.500 7.500V20M0 20.500h24" />
                <path d="M9.500 23h5l-2.500 2.500z" fill={c.faint} />
              </Svg>
            </TabRow>
            <Banner>
              <AiMark w={28} h={18} color="#f5f6f8" />
              Is smart money accumulating or distributing HOME?
            </Banner>
            <Toolbar>
              <Intervals>
                {intervals.map(([t, w]) => (
                  <Interval key={t} $w={w} $active={t === '1m'}>{t}</Interval>
                ))}
              </Intervals>
              <Spacer $w={11} />
              <Caret />
              <Spacer $w={11} />
              <Rule $h={28} />
              <Spacer $w={34} />
              <Svg $w={23} $h={27} viewBox="0 0 23 27" $color={c.muted} $sw={2}>
                <path d="M5.500 3v21M16 0v27" />
                <path d="M1.500 8h8v11h-8zM12 5h8.500v16H12z" fill={c.muted} stroke="none" />
              </Svg>
              <Spacer $w={13} />
              <Caret $w={12} />
              <Spacer $w={31} />
              <Rule $h={28} />
              <Spacer $w={31} />
              <Svg $w={22} $h={24} viewBox="0 0 22 24" $color={c.muted} $sw={2.3}>
                <path d="M14 1.500C10 0 8.300 2.500 8 6L7 17c-.4 4-2.500 5-5.500 4M2.500 8.500h11M12.500 13l8.500 9.500M21 13l-8.500 9.500" />
              </Svg>
              <Spacer $w={33} />
              <Svg $w={24} viewBox="0 0 24 24" $color={c.muted} $sw={2.2}>
                <path d="M5 20.800A11 11 0 1 1 19 20.800z" />
                <circle cx="12" cy="15" r="2.600" />
                <path d="M12 12.500V6M4.800 12.500h2.500M16.700 12.500h2.500M6.800 7l1.600 1.600M17.200 7l-1.600 1.600" />
              </Svg>
              <Spacer $w={31} />
              <Svg $w={24} viewBox="0 0 24 24" $color={c.muted} $sw={2.2}>
                <path d="M1.500 2h8v7.500h-8zM1.500 14.500h8V22h-8zM14 2.500h10M14 9h10M14 15h10M14 21.500h10" />
              </Svg>
              <Spacer $w={33} />
              <Svg $w={27} $h={24} viewBox="0 0 27 24" $color={c.muted} $sw={2.3}>
                <path d="M1.500 5h6.500l2.500-3.500h6.500L19.500 5h6v17h-24z" />
                <circle cx="13.500" cy="13" r="4.300" />
              </Svg>
              <Spacer $w={31} />
              <ToolText>Last Price</ToolText>
              <Caret $w={12} />
              <Spacer />
              <Segments>
                <Segment>Original</Segment>
                <Segment $active>TradingView</Segment>
                <Segment>Depth</Segment>
              </Segments>
              <Spacer $w={31} />
              <Svg $w={26} viewBox="0 0 26 26" $sw={2}>
                <rect x="1" y="1" width="24" height="24" rx="1" />
                <path d="M1 4h24M1 8.500h24" />
              </Svg>
              <Spacer $w={38} />
              <Svg $w={24} viewBox="0 0 24 24" $sw={2.4}>
                <path d="M1.200 8.500V1.200h7.300M1.200 1.200L9 9M15.500 1.200h7.300v7.300M22.800 1.200L15 9M1.200 15.500v7.300h7.300M1.200 22.800L9 15M22.800 15.500v7.300h-7.300M22.800 22.800L15 15" />
              </Svg>
            </Toolbar>

            <Workspace>
              <Tools>
                {topTools.map((d, i) => (
                  <ToolSlot key={i} $h={62.800}>
                    <Svg {...side}>{d}</Svg>
                  </ToolSlot>
                ))}
                <ToolRule $mt={11} $mb={14} />
                <ToolSlot $h={60}>
                  <Svg {...side}>
                    <path d="M4 37v-5L32 6c2-1.500 4-1.500 5 0M20 37l17-15M9 28l4 4M14 23.500l3 3.500M19 19l3 3.500M24 14.500l3 3.500M29 10l3 3.500" />
                  </Svg>
                </ToolSlot>
                <ToolSlot $h={60}>
                  <Svg {...side}>
                    <circle cx="17.500" cy="19" r="11.500" />
                    <path d="M17.500 14v10M12.500 19h10M25.500 27l6 5" />
                  </Svg>
                </ToolSlot>
                <ToolRule $mt={13} $mb={15} />
                <ToolSlot $h={53} $active>
                  <Svg {...side}>
                    <path d="M9 32V19a11 11 0 0 1 22 0v13h-7V19.500a4 4 0 0 0-8 0V32zM9 26.500h7M24 26.500h7" />
                  </Svg>
                </ToolSlot>
                <ToolSlot $h={73}>
                  <Svg {...side}>
                    <path d="M5 26l1-7L21 7l6 5L12 25zM18.500 9l6 5M8 18l5 5" />
                    <rect x="22" y="24" width="11" height="9" rx="1" />
                    <path d="M24.500 24v-3c0-3.500 5.500-3.500 6-.5M27.500 27.500v2" />
                  </Svg>
                </ToolSlot>
                <ToolSlot $h={56}>
                  <Svg {...side}>
                    <rect x="9" y="18" width="21.500" height="14.500" rx="2" />
                    <path d="M14.500 18v-4c0-8 10-7.500 10.500-1.500" />
                    <circle cx="20" cy="25" r="1.800" fill="#d3d4d8" />
                  </Svg>
                </ToolSlot>
                <ToolSlot $h={69}>
                  <Svg {...side}>
                    <path d="M7 17C14 5 32 5 39 17 32 28 14 28 7 17zM28 35c2-2.500 5-3 7-.5M34 32l5-2M37 35l2 1" />
                    <circle cx="23" cy="17" r="5.500" />
                  </Svg>
                </ToolSlot>
                <ToolRule $mt={7} $mb={11} />
                <ToolSlot $h={62}>
                  <Svg {...side}>
                    <path d="M8 13h24M15 13V9.500h10V13M10 13v17c0 1.500.5 2 2 2h16c1.500 0 2-.5 2-2V13M17 18.500v9M23 18.500v9" />
                  </Svg>
                </ToolSlot>
                <ToolSlot $h={142}>
                  <Svg {...side}>
                    <path d="M20 6l12.500 9L20 24 7.500 15zM8.500 19.500L20 28l11.500-8.500M10 25l10 7.500L30 25" />
                  </Svg>
                </ToolSlot>
              </Tools>
              <CanvasCol>
                <Chart />
                <Collapse>
                  <Svg $w={6} $h={12} viewBox="0 0 6 12" $color="#c9ccd2" $sw={1.8}>
                    <path d="M5 0L1 6l4 6" />
                  </Svg>
                </Collapse>
                <Footer>
                  <Svg $w={30} $h={28} viewBox="0 0 30 28" $color="#d3d4d8" $sw={2}>
                    <path d="M2 9.500V5c0-1.500.5-2 2-2h23c1.500 0 2 .5 2 2v18c0 1.500-.5 3-2 3H16M2 9h27M9 0v5M22 0v5M0 19.500h12M8 14.500l5 5-5 5" />
                  </Svg>
                  <Spacer />
                  <Clock>09:22:38 (UTC+7)</Clock>
                  <Rule $h={39} $color="#4a4b51" />
                  <FootItem $ml={22}>%</FootItem>
                  <FootItem $ml={27}>log</FootItem>
                  <FootItem $ml={25} $color={c.blue}>Auto</FootItem>
                </Footer>
              </CanvasCol>
            </Workspace>
          </ChartPanel>

          <BookPanel>
            <TabRow $pl={29} $pr={18} $gap={0}>
              <Tab $active>Order Book</Tab>
              <Spacer $w={41} />
              <Tab>Market Trades</Tab>
              <Spacer $w={43} />
              <Tab $fade>Mark</Tab>
              <Spacer />
              <Svg $w={13} $h={26} viewBox="0 0 13 26" $color={c.muted} $sw={2.2}>
                <path d="M1 1l10.500 12L1 25" />
              </Svg>
              <Spacer $w={39} />
              <Svg $w={21} viewBox="0 0 21 21" $sw={1.8}>
                <path d="M9 20H3c-1.500 0-2-.5-2-2V3c0-1.500.5-2 2-2h15c1.500 0 2 .5 2 2v6M13.500 13H20v7h-6.500zM5 5l5.500 5.500M10.500 6v4.500H6" />
              </Svg>
              <Spacer $w={18} />
              <SlidersIcon w={24} />
            </TabRow>
            <BookTools>
              <Depth $active>{bars([c.down, c.down, c.up, c.up], [25, 20, 20, 25])}</Depth>
              <Depth>{bars([c.up, c.up, c.up, c.up], [20, 20, 20, 26])}</Depth>
              <Depth>{bars([c.down, c.down, c.down, c.down], [26, 20, 20, 20])}</Depth>
              <Spacer />
              <Step>
                0.00001 <Caret />
              </Step>
            </BookTools>
            <BookHead>
              <span>Price(USDT)</span>
              <span>Quantity(USDT)</span>
              <span>Total(USDT)</span>
            </BookHead>
            <Book rows={asks} />
            <Mid>
              <MidPrice>0.006411</MidPrice>
              <Svg $w={14} $h={22} viewBox="0 0 14 22" $color={c.up} $sw={2.3}>
                <path d="M7 22V2M.500 8.500L7 1.500l6.500 7" />
              </Svg>
              <Fair>0.006418</Fair>
            </Mid>
            <Book rows={bids} bid />
            <Ratio>
              <RatioPart $buy>
                <Tag>B</Tag>
                <span>38.2%</span>
              </RatioPart>
              <RatioPart>
                <span />
                <span>61.8%</span>
                <Tag>S</Tag>
              </RatioPart>
            </Ratio>
          </BookPanel>
        </Body>
        <Watermark>
          <Svg $w={27} viewBox="0 0 27 27" $color="none">
            <path
              fill="#e4e5e8"
              d="M13.500 0l8 8-3 3-5-5-5 5-3-3zM3 10.500l3 3-3 3-3-3zM24 10.500l3 3-3 3-3-3zM13.500 10.500l3 3-3 3-3-3zM8.500 16l5 5 5-5 3 3-8 8-8-8z"
            />
          </Svg>
          <span>@ ScalpingX</span>
        </Watermark>
      </Page>
    </>
  );
}
